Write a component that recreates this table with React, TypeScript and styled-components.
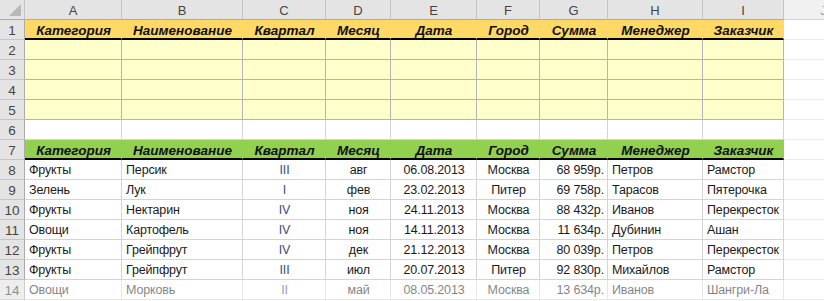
import * as React from 'react';
import styled, { createGlobalStyle, css } from 'styled-components';

const font = `'Liberation Sans', Arial, sans-serif`;
const gridLine = '#d4d4d4';
const fillLine = '#b4b4b4';
const headBg = '#e4e4e4';
const headLine = '#c4c4c4';

const GlobalStyle = createGlobalStyle`
  html, body {
    margin: 0;
    padding: 0;
    background: #fff;
    overflow: hidden;
  }
  body {
    font-family: ${font};
  }
`;

const Sheet = styled.div`
  display: grid;
  grid-template-columns: 25px 97px 121px 83px 65px 86px 63px 68px 95px 81px 80px;
  grid-auto-rows: 20px;
  width: 904px;
  font-family: ${font};
`;

const Corner = styled.div`
  display: flex;
  align-items: flex-end;
  justify-content: flex-end;
  padding: 0 3px 3px 0;
  box-sizing: border-box;
  background: ${headBg};
  border-right: 1px solid ${headLine};
  border-bottom: 1px solid #ababab;
`;

const Triangle = styled.span`
  width: 0;
  height: 0;
  border-left: 12px solid transparent;
  border-bottom: 12px solid #b8b8b8;
`;

const ColHead = styled.div<{ $faded?: boolean }>`
  display: flex;
  align-items: center;
  justify-content: center;
  box-sizing: border-box;
  background: ${headBg};
  border-right: 1px solid ${headLine};
  border-bottom: 1px solid #ababab;
  color: #444;
  font-size: 13px;
  padding-top: 1px;
  opacity: ${(p) => (p.$faded ? 0.5 : 1)};
`;

const RowHead = styled.div<{ $faded?: boolean }>`
  display: flex;
  align-items: center;
  justify-content: center;
  box-sizing: border-box;
  background: ${headBg};
  border-right: 1px solid #ababab;
  border-bottom: 1px solid ${headLine};
  color: #444;
  font-size: 13.5px;
  padding-top: 1px;
  opacity: ${(p) => (p.$faded ? 0.6 : 1)};
`;

type Kind = 'gold' | 'green' | 'fill' | 'plain' | 'spare';

const bgFor: Record<Kind, string> = {
  gold: '#ffd966',
  green: '#92d050',
  fill: '#ffffcc',
  plain: '#ffffff',
  spare: '#ffffff',
};

const Cell = styled.div<{
  $kind: Kind;
  $align?: 'left' | 'center' | 'right';
  $thick?: boolean;
  $faded?: boolean;
  $tone?: string;
}>`
  display: flex;
  align-items: center;
  box-sizing: border-box;
  padding: 1px 3px 0 4px;
  overflow: hidden;
  white-space: nowrap;
  background: ${(p) => bgFor[p.$kind]};
  color: ${(p) => p.$tone || '#1a1a1a'};
  font-size: 12.5px;
  letter-spacing: -0.15px;
  justify-content: ${(p) =>
    p.$align === 'center' ? 'center' : p.$align === 'right' ? 'flex-end' : 'flex-start'};
  border-right: 1px solid ${(p) => (p.$kind === 'fill' ? fillLine : p.$kind === 'spare' ? '#ececec' : gridLine)};
  border-bottom: 1px solid ${(p) => (p.$kind === 'fill' ? fillLine : p.$kind === 'spare' ? '#ececec' : gridLine)};
  opacity: ${(p) => (p.$faded ? 0.55 : 1)};

  ${(p) =>
    (p.$kind === 'gold' || p.$kind === 'green') &&
    css`
      font-weight: 700;
      font-style: italic;
      font-size: 13.5px;
      letter-spacing: 0;
      color: #111;
      border-right-color: ${bgFor[p.$kind]};
    `}

  ${(p) =>
    p.$thick &&
    css`
      border-bottom: 2px solid #000;
      padding-top: 2px;
    `}
`;

const columns = ['A', 'B', 'C', 'D', 'E', 'F', 'G', 'H', 'I'];
const titles = ['Категория', 'Наименование', 'Квартал', 'Месяц', 'Дата', 'Город', 'Сумма', 'Менеджер', 'Заказчик'];
const aligns: ('left' | 'center' | 'right')[] = ['left', 'left', 'center', 'center', 'center', 'center', 'right', 'left', 'left'];

const rows: string[][] = [
  ['Фрукты', 'Персик', 'III', 'авг', '06.08.2013', 'Москва', '68 959р.', 'Петров', 'Рамстор'],
  ['Зелень', 'Лук', 'I', 'фев', '23.02.2013', 'Питер', '69 758р.', 'Тарасов', 'Пятерочка'],
  ['Фрукты', 'Нектарин', 'IV', 'ноя', '24.11.2013', 'Москва', '88 432р.', 'Иванов', 'Перекресток'],
  ['Овощи', 'Картофель', 'IV', 'ноя', '14.11.2013', 'Москва', '11 634р.', 'Дубинин', 'Ашан'],
  ['Фрукты', 'Грейпфрут', 'IV', 'дек', '21.12.2013', 'Москва', '80 039р.', 'Петров', 'Перекресток'],
  ['Фрукты', 'Грейпфрут', 'III', 'июл', '20.07.2013', 'Питер', '92 830р.', 'Михайлов', 'Рамстор'],
  ['Овощи', 'Морковь', 'II', 'май', '08.05.2013', 'Москва', '13 634р.', 'Иванов', 'Шангри-Ла'],
];

function TitleRow({ n, kind }: { n: number; kind: 'gold' | 'green' }) {
  return (
    <>
      <RowHead>{n}</RowHead>
      {titles.map((t) => (
        <Cell key={t} $kind={kind} $align="center" $thick>
          {t}
        </Cell>
      ))}
      <Cell $kind="spare" />
    </>
  );
}

function BlankRow({ n, kind }: { n: number; kind: 'fill' | 'plain' }) {
  return (
    <>
      <RowHead>{n}</RowHead>
      {columns.map((c) => (
        <Cell key={c} $kind={kind} />
      ))}
      <Cell $kind="spare" />
    </>
  );
}

export default function App() {
  return (
    <>
      <GlobalStyle />
      <Sheet>
        <Corner>
          <Triangle />
        </Corner>
        {columns.map((c) => (
          <ColHead key={c}>{c}</ColHead>
        ))}
        <ColHead $faded>J</ColHead>

        <TitleRow n={1} kind="gold" />
        {[2, 3, 4, 5].map((n) => (
          <BlankRow key={n} n={n} kind="fill" />
        ))}
        <BlankRow n={6} kind="plain" />
        <TitleRow n={7} kind="green" />

        {rows.map((r, i) => {
          const faded = i === rows.length - 1;
          return (
            <React.Fragment key={i}>
              <RowHead $faded={faded}>{i + 8}</RowHead>
              {r.map((v, j) => (
                <Cell
                  key={j}
                  $kind="plain"
                  $align={aligns[j]}
                  $faded={faded}
                  $tone={j === 2 ? '#34507a' : undefined}
                >
                  {v}
                </Cell>
              ))}
              <Cell $kind="spare" />
            </React.Fragment>
          );
        })}
      </Sheet>
    </>
  );
}
